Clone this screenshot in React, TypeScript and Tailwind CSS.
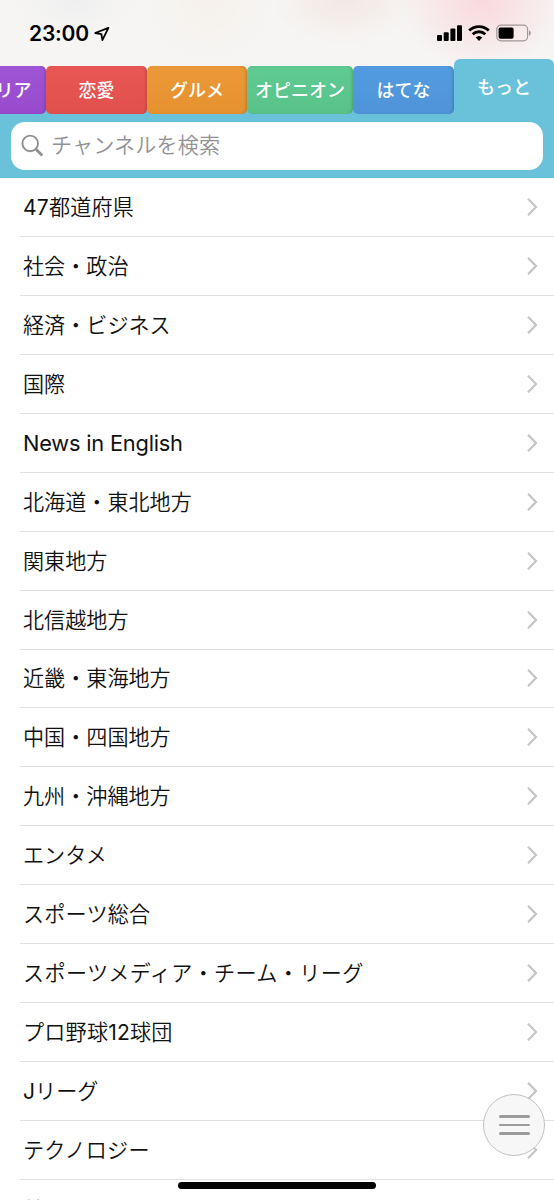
import { clsx } from 'clsx';

const tabs = [
  { label: 'リア', className: 'w-[46px] justify-start rounded-l-none bg-linear-to-b from-[#9f55d6] to-[#984acb]' },
  { label: '恋愛', className: 'w-[101px] justify-center bg-linear-to-b from-[#e85753] to-[#e2504e]' },
  { label: 'グルメ', className: 'w-[100px] justify-center bg-linear-to-b from-[#eb9938] to-[#e69130]' },
  { label: 'オピニオン', className: 'w-[106px] justify-center bg-linear-to-b from-[#5fcb92] to-[#58c289]' },
  { label: 'はてな', className: 'w-[101px] justify-center bg-linear-to-b from-[#539ce1] to-[#4f93d8]' },
];

const channels = [
  { label: '47都道府県', className: 'tracking-[0.2px]' },
  { label: '社会・政治' },
  { label: '経済・ビジネス' },
  { label: '国際' },
  { label: 'News in English', className: '-mt-[2px] text-[21.8px] tracking-[-0.2px]' },
  { label: '北海道・東北地方' },
  { label: '関東地方' },
  { label: '北信越地方' },
  { label: '近畿・東海地方' },
  { label: '中国・四国地方' },
  { label: '九州・沖縄地方' },
  { label: 'エンタメ' },
  { label: 'スポーツ総合', className: 'tracking-[0.2px]' },
  { label: 'スポーツメディア・チーム・リーグ', className: 'tracking-[0.35px]' },
  { label: 'プロ野球12球団', className: 'tracking-[0.2px]' },
  { label: 'Jリーグ' },
  { label: 'テクノロジー', className: 'tracking-[0.25px]' },
  { label: '美', className: 'mt-[2px]' },
];

function StatusBar() {
  return (
    <div className="flex h-[58px] items-start justify-between pt-[22px] pr-[22px] pl-[29px] text-black">
      <div className="flex items-center gap-[5px]">
        <span className="text-[21px] leading-[23px] font-semibold tracking-[-0.2px]">23:00</span>
        <svg width="16" height="16" viewBox="0 0 16 16" fill="none" stroke="currentColor" strokeWidth="1.8" strokeLinejoin="round">
          <path d="M14.4 1.8 1.2 7l6.2 1.2 1 6z" />
        </svg>
      </div>
      <div className="flex pt-[2px]">
        <svg width="26" height="18" viewBox="0 0 26 18" fill="currentColor">
          <rect x="0" y="11" width="5" height="6" rx="1" />
          <rect x="6.7" y="8.2" width="5" height="8.8" rx="1" />
          <rect x="13.4" y="4.6" width="5" height="12.4" rx="1" />
          <rect x="20" y="1.3" width="5" height="15.7" rx="1" />
        </svg>
        <svg className="ml-[5px]" width="22" height="18" viewBox="0 0 22 18" fill="none" stroke="currentColor" strokeWidth="2.8">
          <path d="M1.2 6.6a14 14 0 0 1 19.6 0" />
          <path d="M4.7 10.3a9 9 0 0 1 12.6 0" />
          <path d="M11 16.9 7.7 13.6a4.8 4.8 0 0 1 6.6 0z" fill="currentColor" stroke="none" />
        </svg>
        <svg className="ml-[6px]" width="36" height="18" viewBox="0 0 36 18" fill="none">
          <rect x="0.8" y="1.2" width="30.8" height="15.6" rx="4" stroke="#a09799" strokeWidth="1.2" />
          <rect x="2.6" y="3.4" width="15" height="11.4" rx="1.8" fill="#000" />
          <path d="M33 6.5c2.4.8 2.4 4.4 0 5.2z" fill="#a09799" />
        </svg>
      </div>
    </div>
  );
}

function TabBar() {
  return (
    <div className="flex h-[56px] items-end bg-[linear-gradient(to_top,#6ac1da_6px,transparent_6px)] text-[18px] font-medium text-white">
      {tabs.map((tab) => (
        <div
          key={tab.label}
          className={clsx(
            'flex h-[48px] shrink-0 items-center rounded-[5px] pt-px whitespace-nowrap shadow-[inset_-2px_0_3px_-1px_rgba(0,0,0,0.18)]',
            tab.className
          )}
        >
          <span className={tab.label === 'リア' ? '-ml-[4.5px]' : ''}>{tab.label}</span>
        </div>
      ))}
      <div className="flex h-[55px] flex-1 items-center justify-center rounded-t-[6px] bg-[#6ac1da] pt-[2px]">もっと</div>
    </div>
  );
}

function SearchBar() {
  return (
    <div className="h-[64px] bg-[#6ac1da] px-[11px] pt-[8px]">
      <div className="flex h-[48px] items-center rounded-[14px] bg-white pl-[10px] text-[#929296]">
        <svg width="24" height="24" viewBox="0 0 24 24" fill="none" stroke="#8e8e93">
          <circle cx="9.2" cy="9.4" r="7.8" strokeWidth="1.9" />
          <path d="m15 15.3 6.2 6.2" strokeWidth="2.8" />
        </svg>
        <span className="ml-[6px] text-[21.1px] leading-[30px] font-[350] tracking-[0.15px]">チャンネルを検索</span>
      </div>
    </div>
  );
}

function ChannelRow({ label, className }: { label: string; className?: string }) {
  // latin letters and digits are set a little heavier than the kana around them
  const parts = label.split(/([A-Za-z0-9 ]+)/).filter(Boolean);

  return (
    <li className="ml-[20px] flex h-[58.95px] shrink-0 items-center justify-between border-b border-[#e0e0e2] pr-[16px] pl-[3px]">
      <span className={clsx('pt-[2px] leading-[30px] whitespace-nowrap', className)}>
        {parts.map((part) => (
          <span key={part} className={/^[A-Za-z0-9 ]/.test(part) ? 'font-normal' : undefined}>
            {part}
          </span>
        ))}
      </span>
      <svg width="12" height="20" viewBox="0 0 12 20" fill="none" stroke="#c5c5c8" strokeWidth="2.2">
        <path d="m2 1.8 8 8.2-8 8.2" />
      </svg>
    </li>
  );
}

export default function App() {
  return (
    <div
      lang="ja"
      className="relative flex h-[1200px] w-[554px] flex-col overflow-hidden bg-white font-[Inter,'Noto_Sans_CJK_JP',sans-serif] text-[#111]"
    >
      <header className="shrink-0 bg-[#f6f5f4] bg-[radial-gradient(ellipse_85px_70px_at_482px_0px,#fad8dd,transparent),radial-gradient(ellipse_75px_45px_at_345px_0px,#f2e8e4,transparent),radial-gradient(ellipse_60px_60px_at_210px_0px,#f5f0ea,transparent),radial-gradient(ellipse_60px_35px_at_75px_0px,#efefef,transparent)]">
        <StatusBar />
        <TabBar />
        <SearchBar />
      </header>

      <ul className="flex min-h-0 flex-1 flex-col text-[21.1px] font-[350]">
        {channels.map((channel) => (
          <ChannelRow key={channel.label} {...channel} />
        ))}
      </ul>

      <button
        type="button"
        aria-label="メニュー"
        className="absolute right-[9px] bottom-[44px] flex h-[62px] w-[62px] flex-col items-center justify-center gap-[6px] rounded-full border border-[#c2c2c2] bg-[#f7f7f7]/95"
      >
        <span className="h-[2.6px] w-[31px] rounded-full bg-[#9b9b9b]" />
        <span className="h-[2.6px] w-[31px] rounded-full bg-[#9b9b9b]" />
        <span className="h-[2.6px] w-[31px] rounded-full bg-[#9b9b9b]" />
      </button>
      <div className="absolute bottom-[11px] left-[178px] h-[7px] w-[198px] rounded-full bg-black" />
    </div>
  );
}
